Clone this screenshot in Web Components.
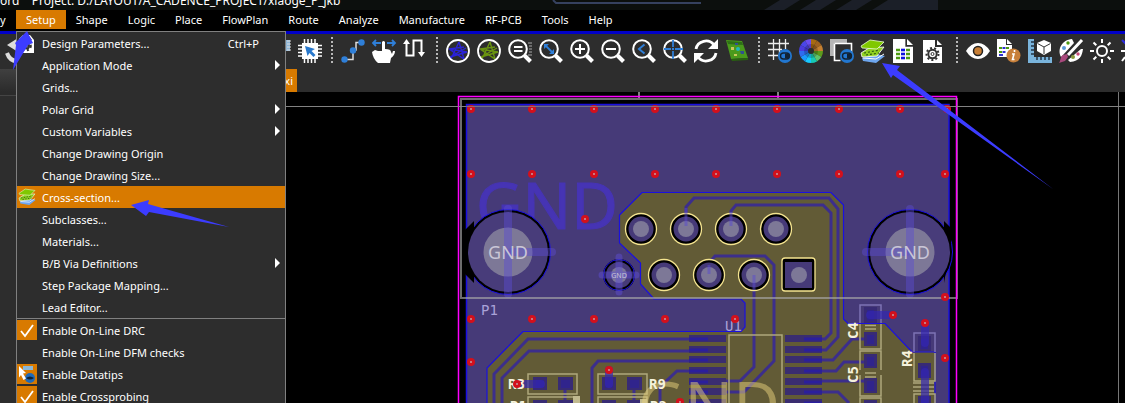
<!DOCTYPE html>
<html lang="en">
<head>
<meta charset="utf-8">
<title>PCB layout editor</title>
<style>
html,body{margin:0;height:100%;background:#000;overflow:hidden}
body{font:11px/22px "Noto Sans","Open Sans",sans-serif;color:#fff}
</style>
</head>
<body>
<app-window></app-window>
<script>
const define = (tag, html) => customElements.define(tag, class extends HTMLElement {
  constructor(){ super(); this.attachShadow({mode:'open'}).innerHTML = html; }
});

/* ---------- icons, 24px grid ---------- */
const lens = '<circle cx="10" cy="10" r="8.8" fill="none" stroke="#fff" stroke-width="2"/><path d="M16.5 16.5l6 6" stroke="#fff" stroke-width="4"/>';
const toggle = '<circle cx="17" cy="17" r="7" fill="#2277d0"/><rect x="12.5" y="14" width="9" height="6" rx="3" fill="none" stroke="#123" stroke-width="1.4"/><path d="M17 14.500h2a2.500 2.500 0 0 1 0 5h-2z" fill="#123"/>';
const page = '<path d="M1 0h13v7h7v17H1z" fill="#fff"/><path d="M15 0l6 6h-6z" fill="#fff"/>';
const net = c => `<path d="M13 3L5 20M13 3L18 20L3 10L21 13L4 18L20 9M3 10L18 8" fill="none" stroke="${c}" stroke-width="1.400"/><circle cx="12" cy="12" r="11" fill="none" stroke="#fff" stroke-width="1.8"/>`;
const wheel = ['#a76a12','#a0621e','#c48030','#5d9b1b','#5fc46a','#17c9b4','#18c8ff','#1a9bff','#2f6cf0','#4a3ae0','#4b46e8','#6a4cf0'].map((c,i)=>{
  const p=(a,r)=>{const t=(a*30-90)*Math.PI/180;return (12+r*Math.cos(t)).toFixed(2)+' '+(12+r*Math.sin(t)).toFixed(2)};
  return `<path d="M12 12L${p(i,12)}A12 12 0 0 1 ${p(i+1,12)}z" fill="${c}"/>`}).join('')+'<circle cx="12" cy="12" r="7" fill="#000" fill-opacity=".2"/><circle cx="12" cy="12" r="3" fill="#2d2d2d"/>';
const stack = '<path d="M1 19l14-4 9 2-9 7-13-2z" fill="#6ea6ee"/><path d="M2 19l13 1 8-5" fill="none" stroke="#fff"/><path d="M0 14l8-5 15-1-7 9-15 1z" fill="#8fd020" stroke="#fff" stroke-width=".8"/><path d="M3 14l16-3M5 16l13-2" stroke="#2d5d10" stroke-dasharray="2 2" stroke-width="1.200"/><path d="M0 7l9-6 14 2-7 7-15-1z" fill="#80c800" stroke="#e8ffd0" stroke-width=".8"/>';
const cells = [11,15,19].map(y=>`<path d="M4 ${y}h4M14 ${y}h4" stroke="#4c9a10" stroke-width="2.600"/><path d="M9 ${y}h4" stroke="#1010e0" stroke-width="2.600"/>`).join('');
const gear = (x,y,r,c)=>`<circle cx="${x}" cy="${y}" r="${r}" fill="none" stroke="${c}" stroke-width="2"/><circle cx="${x}" cy="${y}" r="${r+1.8}" fill="none" stroke="${c}" stroke-width="2" stroke-dasharray="2 2.170"/><circle cx="${x}" cy="${y}" r="1.500" fill="none" stroke="${c}"/>`;
const ICONS = {
  undo:'<path d="M0 6L11 -1V13z" fill="#dcdcdc"/><path d="M0 14Q3 23 12 22" fill="none" stroke="#dcdcdc" stroke-width="4"/>',
  blank:'',
  part:'<path d="M14 1h9v11h-9z" fill="#8fb6d6"/><path d="M20 2h4M20 5h4M20 8h4M20 11h4" stroke="#ddd"/>',
  chip:'<path d="M4 4h16v16H4z" fill="#fff"/><path d="M6.500 0v24M10 0v24M13.500 0v24M17 0v24M0 6.500h24M0 10h24M0 13.500h24M0 17h24" stroke="#fff" stroke-width="1.500"/><path d="M7 7l10 3-3.500 2 4 4-2 2-4-4-2 3z" fill="#2878cc"/>',
  route:'<path d="M3 20.500h9V11h3V3.500h5" fill="none" stroke="#ddd" stroke-width="1.500"/><g fill="#2f7fd8"><circle cx="3.500" cy="20.500" r="3.200"/><circle cx="12" cy="11.500" r="3.200"/><circle cx="20.500" cy="3.500" r="3.200"/></g>',
  hand:'<path d="M1 4h8M15 4h8M4 1L1 4l3 3M20 1l3 3-3 3" fill="none" stroke="#2f7fd8" stroke-width="1.800"/><path d="M0 13l3-2 3 1 4 0V3q1.500-2 3 0v7q6 0 6 3l1 2 1-3h2q0 4-4 7l-1 5H6Q1 20 0 13z" fill="#fff"/>',
  meander:'<path d="M3.500 4V16.500H10.500V1.500H18.500V15" fill="none" stroke="#fff" stroke-width="2"/><path d="M0 5l3.500-5L7 5zM15 13h7l-3.500 5z" fill="#fff"/>',
  netBlue:net('#2a22d8'), netGreen:net('#6a9410'),
  zoomSel:lens+'<path d="M6 8h8.500M6 12h8.500" stroke="#fff" stroke-width="2"/><path d="M20 4h4M21 7h3M21 10h3M21 13h3M20 16h4" stroke="#aaa"/>',
  zoomBox:lens+'<path d="M6 6l8 8" stroke="#2f7fd8" stroke-width="1.800"/><path d="M5 5h5l-5 5zM15 15v-5l-5 5z" fill="#2f7fd8"/>',
  zoomIn:lens+'<path d="M5 10h10M10 5v10" stroke="#fff" stroke-width="2"/>',
  zoomOut:lens+'<path d="M5 10h10" stroke="#fff" stroke-width="2"/>',
  zoomPrev:lens+'<path d="M12.500 5.500L7 10l5.500 4.500" fill="none" stroke="#2f7fd8" stroke-width="2"/>',
  zoomCtr:lens+'<path d="M10 1v7M10 12v8M1 10h7M12 10h8M10 9v2M9 10h2" stroke="#2f7fd8" stroke-width="1.800"/>',
  refresh:'<path d="M2 10A10 9.500 0 0 1 20 6M22 14A10 9.500 0 0 1 4 18" fill="none" stroke="#fff" stroke-width="2.800"/><path d="M24 0v10H14zM0 24V14h10z" fill="#fff"/>',
  board:'<path d="M1 1l16 1 6 17-17 1z" fill="#4a9a1c"/><path d="M2 2l15 1 1 3-15-1z" fill="#2d6f16"/><path d="M6 8h3v3H6zM9 15h3v2H9z" fill="#c8c85a"/><circle cx="13" cy="10" r="2" fill="#20b8b8"/><path d="M15 12h4v3h-3zM10 4h3v2h-3z" fill="#305090"/><path d="M6 20l17-1v2l-16 1z" fill="#286010"/>',
  grid:'<path d="M5.500 0v21M11.500 0v16M17.500 0v10M0 4.500h21M0 10.500h14M0 16.500h10" stroke="#eee" stroke-width="1.300"/>'+toggle,
  wheel, 
  layers:'<path d="M0 0h17v4H4v13H0z" fill="#b5b5b5"/><path d="M4.500 4.500h17v14M4.500 4.500v17h6" fill="none" stroke="#fff" stroke-width="1.600"/>'+toggle,
  stack,
  table:page+'<path d="M14 0v7h7" fill="none" stroke="#2d2d2d" stroke-width="1.300"/>'+cells,
  pageGear:'<path d="M0 1h12v7h7v16H0z" fill="#fff"/><path d="M14 1l5 5h-5z" fill="#fff"/>'+gear(9.500,15,4.200,'#333'),
  eye:'<path d="M0 12Q5 4 12 4T24 12Q19 20 12 20T0 12z" fill="#fff"/><circle cx="12" cy="12" r="4.500" fill="#c87f36" stroke="#222" stroke-width="1.500"/>',
  pageInfo:'<path d="M0 0h9v6h6v12H0z" fill="#fff"/><path d="M10 0l5 5h-5z" fill="#fff"/><path d="M2 9h3M2 13h3M9 9h3" stroke="#4c9a10" stroke-width="2"/><path d="M5.500 9h3M5.500 13h3M2 16h4" stroke="#3030d0" stroke-width="2"/><circle cx="16.500" cy="16.500" r="7" fill="#c8803a"/><path d="M15 15h2l-1.500 5.500h2M17.500 11v2" fill="none" stroke="#fff" stroke-width="1.600"/>',
  ruler:'<path d="M0 0h6v18h18v6H0z" fill="#7ab4dc"/><path d="M3 3h3M3 7h3M3 11h3M3 15h3M9 18v3M13 18v3M17 18v3M21 18v3" stroke="#234" stroke-width="1.500"/><path d="M16 1l7 3v8l-7 4-7-4V4z" fill="#fff"/><path d="M9.500 4.500L16 8l6.500-3.500M16 8v7" fill="none" stroke="#333"/>',
  palette:'<path d="M2 18C-2 10 3 1 13 0L15 4 4 16zM24 10C23 17 21 22 11 23L9 21 22 10z" fill="#fff"/><path d="M23 1L9 16" stroke="#fff" stroke-width="3"/><path d="M0 24C2 21 1 18 4 16l4-1 1 3-3 4z" fill="#a8487c"/><circle cx="9" cy="4" r="1.700" fill="#4c9a10"/><circle cx="5" cy="9" r="2" fill="#5a9ad8"/><circle cx="19" cy="15" r="1.700" fill="#c84a78"/><circle cx="14" cy="18" r="2" fill="#8a9a3a"/>',
  sun:'<circle cx="12" cy="12" r="5" fill="none" stroke="#fff" stroke-width="2"/><path d="M12 0v4M12 20v4M0 12h4M20 12h4M3.500 3.500l2.800 2.800M17.700 17.700l2.800 2.800M3.500 20.500l2.800-2.800M17.700 6.300l2.800-2.800" stroke="#fff" stroke-width="2"/>',
  shadow:'<path d="M1 1l4 4" stroke="#2a2ae0" stroke-width="2"/><path d="M0 12h4M1 22l3-4" stroke="#fff" stroke-width="2"/>',
  design:'<path d="M0 4L4 0h7l4 5v13H0z" fill="#fff"/><path d="M5 1h5l3 4H3z" fill="#333"/>'+gear(7.500,11,2.500,'#333'),
  tip:'<path d="M6 2h10v4H6z" fill="#8cb8d8"/><circle cx="13" cy="14" r="5" fill="#1f6ab8"/><path d="M9 14q4-3 8 0-4 3-8 0z" fill="#123"/><path d="M2 2l7 7-3 .500 3 5-2.500 1.500-2.500-5-2 2.500z" fill="#fff"/>',
  check:'<path d="M4 11l4 5 8-11" fill="none" stroke="#fff" stroke-width="1.800"/>'
};
customElements.define('ui-icon', class extends HTMLElement {
  constructor(){ super(); this.attachShadow({mode:'open'}); }
  connectedCallback(){
    const name = this.getAttribute('name'), small = this.hasAttribute('small');
    const box = !small ? '0 0 24 24' : name==='stack' ? '-3 -2 29 29' : name==='design' ? '-2 -2 20 20' : '0 0 20 20';
    this.shadowRoot.innerHTML = `<style>:host{display:block;width:24px;height:24px}:host([small]){width:20px;height:20px}svg{display:block;width:100%;height:100%;overflow:visible}</style><svg viewBox="${box}" aria-hidden="true">${ICONS[name]}</svg>`;
  }
});

/* ---------- title ---------- */
define('title-bar', `<style>
:host{display:flex;align-items:flex-end;height:10px;overflow:hidden;background:#0c0f0d;font-size:12px;line-height:18px;white-space:pre}
span{flex:none;width:345px}svg{flex:1;height:10px;min-width:0}
</style><span>ord    Project: D:/LAYOUT/A_CADENCE_PROJECT/xiaoge_P_jkb</span>
<svg aria-hidden="true"><g transform="translate(-345 0)"><path d="M553 0l3 3h145" fill="none" stroke="#36415f" stroke-width="2"/><path d="M764 10l16-10h20l-16 10zM800 10l16-10h20l-16 10zM836 10l16-10h20l-16 10zM872 10l16-10h50v10z" fill="#1b1f28"/></g></svg>`);

/* ---------- menu bar ---------- */
define('menu-bar', `<style>
:host{display:block;background:#000;border-bottom:3px solid #0000c8}
nav{display:flex;height:21px;align-items:flex-start;overflow:hidden}
button{all:unset;box-sizing:border-box;flex:none;padding:0 10px;height:19px;line-height:20px}
.cut{width:16px;padding:0}
.on{background:#d87a00}
</style><nav><button class="cut">y</button><button class="on">Setup</button><button>Shape</button><button>Logic</button><button>Place</button><button>FlowPlan</button><button>Route</button><button>Analyze</button><button>Manufacture</button><button>RF-PCB</button><button>Tools</button><button>Help</button></nav>`);

/* ---------- tool bar ---------- */
const tool = n => n==='|' ? '<i></i>' : `<button aria-label="${n}"><ui-icon name="${n}"></ui-icon></button>`;
define('tool-bar', `<style>
:host{display:flex;height:35px;background:#2d2d2d;padding:0 0 0 7px;box-sizing:border-box;overflow:hidden}
button{all:unset;flex:none;width:31px;height:24px;padding:5px 0}
i{flex:none;width:12px;margin:3px 0 5px;background:repeating-linear-gradient(#b8b8b8 0 2px,transparent 2px 4px) 2px 0/2px 100% no-repeat}
</style>${['undo','|','blank','blank','blank','blank','blank','blank','blank','part','chip','|','route','hand','meander','|','netBlue','netGreen','zoomSel','zoomBox','zoomIn','zoomOut','zoomPrev','zoomCtr','refresh','board','|','grid','wheel','layers','stack','table','pageGear','|','eye','pageInfo','ruler','palette','sun','shadow'].map(tool).join('')}`);

define('doc-tabs', `<style>
:host{display:flex;height:23px;background:#2d2d2d}
div{width:40px;background:linear-gradient(#404040,#2b2b2b)}
button{all:unset;box-sizing:border-box;width:257px;padding-right:4px;text-align:right;background:#d87a00;line-height:22px}
</style><div></div><button>xi</button>`);

/* ---------- Setup menu ---------- */
customElements.define('menu-row', class extends HTMLElement {
  constructor(){ super(); this.attachShadow({mode:'open'}); }
  connectedCallback(){
    const a = n => this.getAttribute(n), on = this.hasAttribute('checked'), tick = a('kind')==='check';
    const icon = a('icon') ? `<ui-icon small name="${a('icon')}"></ui-icon>` : '';
    const style = `<style>
:host{display:block}
.row{all:unset;box-sizing:border-box;display:flex;width:100%;height:22px;line-height:23px;padding-right:5px;position:relative}
:host([selected]) .row{background:#d87a00}
.gut{width:20px;height:20px;margin:1px 5px 0 0;flex:none}
.on{background:#d87a00}
.lab{flex:1}
kbd{font:inherit;margin-right:21px}
.sub{align-self:center;border-left:5px solid #fff;border-top:5px solid transparent;border-bottom:5px solid transparent}
input{appearance:none;margin:0;width:0;height:0}
</style>`;
    const key = a('key') ? `<kbd>${a('key')}</kbd>` : '', sub = this.hasAttribute('sub') ? '<span class="sub"></span>' : '';
    const inner = `<span class="gut ${on?'on':''}">${icon}</span><span class="lab"><slot></slot></span>${key}${sub}`;
    this.shadowRoot.innerHTML = style + (tick ? `<label class="row"><input type="checkbox" aria-label="${this.textContent}" ${on?'checked':''}>${inner}</label>` : `<button class="row">${inner}</button>`);
  }
});
define('setup-menu', `<style>
:host{display:block;width:268px;background:#2d2d2d;border:1px solid #808080}
hr{margin:0;border:0;height:1px;background:#808080}
</style>
<menu-row icon="design" key="Ctrl+P">Design Parameters...</menu-row>
<menu-row sub>Application Mode</menu-row>
<menu-row>Grids...</menu-row>
<menu-row sub>Polar Grid</menu-row>
<menu-row sub>Custom Variables</menu-row>
<menu-row>Change Drawing Origin</menu-row>
<menu-row>Change Drawing Size...</menu-row>
<menu-row icon="stack" selected>Cross-section...</menu-row>
<menu-row>Subclasses...</menu-row>
<menu-row>Materials...</menu-row>
<menu-row sub>B/B Via Definitions</menu-row>
<menu-row>Step Package Mapping...</menu-row>
<menu-row>Lead Editor...</menu-row>
<hr>
<menu-row kind="check" icon="check" checked>Enable On-Line DRC</menu-row>
<menu-row kind="check">Enable On-Line DFM checks</menu-row>
<menu-row kind="check" icon="tip" checked>Enable Datatips</menu-row>
<menu-row kind="check" icon="check" checked>Enable Crossprobing</menu-row>`);

/* ---------- board ---------- */
const via = ([x,y]) => `<g><circle cx="${x}" cy="${y}" r="4" fill="#d3101c"/><rect x="${x-1}" y="${y-1}" width="2" height="2" fill="#c87880"/></g>`;
const xs=[471,532,594,655,716,777,839,900];
const vias=[...xs.map(x=>[x,109]),[947,109],...xs.map(x=>[x,174]),[945,174],[471,319],[532,319],[594,319],[665,319],[735,319],[471,362],[585,219],[609,370],[517,384],[893,315],[925,323],[945,297],[945,358],[680,402]].map(via).join('');
const pin=(x,y)=>`<circle cx="${x}" cy="${y}" r="14" fill="#463a78" stroke="#000" stroke-width="3"/><circle cx="${x}" cy="${y}" r="15.500" fill="none" stroke="#f5e590" stroke-width="1.300"/><circle cx="${x}" cy="${y}" r="8" fill="#7d7897"/>`;
const mount=(x,dir)=>`<circle cx="${x}" cy="252" r="42.500" fill="#000" stroke="#1a10e0"/><path d="M${x-dir*43} 230l${dir*9}-9v62l-${dir*9}-9z" fill="#000"/><circle cx="${x}" cy="252" r="40" fill="#483c7a"/><circle cx="${x}" cy="252" r="24.500" fill="#7d7897"/><rect x="${x-4}" y="205" width="8" height="93" rx="4" fill="#5c4cd0" fill-opacity=".45"/><rect x="${dir>0?x:x-48}" y="248" width="48" height="8" rx="4" fill="#5c4cd0" fill-opacity=".45"/><text x="${x}" y="259" text-anchor="middle" font-size="18" fill="#c9c6d6">GND</text>`;
const ys=[335,346,356,367,378,388,399];
const icPins=ys.map(y=>`<path d="M689 ${y}h37v7h-37zM785 ${y}h37v7h-37z" fill="#3a2d70"/><path d="M689 ${y+4}h19M804 ${y+4}h18" stroke="#2b1f9c" stroke-width="3"/>`).join('');
const pads=a=>a.map(([x,y,w,h])=>`<rect x="${x}" y="${y}" width="${w}" height="${h}" fill="#382b74"/><rect x="${x+3}" y="${y+3}" width="${w-6}" height="${h-5}" fill="#2b1f9c" fill-opacity=".6"/>`).join('');
define('pcb-canvas', `<style>
:host{display:block;background:#000;overflow:hidden;position:relative}
svg{display:block;width:100%;height:100%;min-height:311px}
.mono{font:bold 14px "DejaVu Sans Mono",monospace}
.thin{font-weight:normal}
</style><svg role="img" aria-label="Board layout">
<line x1="0" x2="100%" y1="14.5" y2="14.5" stroke="#777"/>
<g transform="translate(-40 -92)">
<path d="M1118.500 92V500" stroke="#777"/><path d="M639 92v6M778 92v6" stroke="#808080" stroke-width="2"/>
<path d="M466.500 104.500H949V450H466.500z" fill="#463a78" stroke="#1a10e0" stroke-width="1.500"/>
<text x="476" y="229" font-size="64" fill="#4634b4" stroke="#4634b4">GND</text>
${mount(508,1)}${mount(910,-1)}
<path d="M642 192.500H831L843.500 205V319L848 323.500H885L912 352H935V450H487V368L523 331.500H741L745 327V303L741 299H654L640.500 284V263L619.500 243V215z" fill="#625b36" stroke="#1a10e0" stroke-width="1.200"/>
<g fill="none" stroke="#3c2e8c" stroke-width="3">
<path d="M709 339H528L494 374V410M709 351H529L502 378V410M709 361H598L592 368V410M709 371H677L660 387V410"/>
<path d="M805 339H825L831 333V213L823 205H736L731 211V224M805 350H826L838 337V209L829 198H694L686 207V224"/>
<path d="M709 270V263L715 256H765L774 265V361L744 392H690M754 280V367L740 381H690"/>
<path d="M805 360H833L852 339H870M805 371H836L844 362H870M805 381H864L870 386M805 392H838L849 403M565 384V410M634 384V410"/></g>
${icPins}
<g fill="none" stroke="#aea87c" stroke-width="1.500"><path d="M729 410V335H782V410"/>
<path d="M528 374H577V394H528zM598 374H647V394H598zM528 410V397H577V410M598 410V397H647V410"/>
<path d="M860 324V349H881V324M860 370V351H881V370M860 375V396H881V375M860 410V398H881V410M914 353V381H935V353M914 410V394H935V410M865 325.500h11M865 329h11M865 373h11M865 377h11M913 383h21M913 387h21M913 391h21"/></g>
<path d="M860 323V305H881V323M914 352V333H935V352" fill="none" stroke="#7d73b4" stroke-width="1.500"/>
${pads([[533,377,14,13],[558,377,15,13],[602,377,14,13],[627,377,15,13],[533,400,14,13],[558,400,15,13],[602,400,14,13],[627,400,15,13],[864,307,13,16],[864,332,13,14],[864,354,13,14],[864,378,13,15],[864,400,13,15],[918,336,13,15],[918,363,13,15],[918,396,13,15]])}
<path d="M517 384H541M609 370V384M870 315H893M925 323V343M925 372V410" stroke="#3326b0" stroke-opacity=".7" stroke-width="8" stroke-linecap="round"/>
<path d="M573 396h7v10h-7zM640 399h7v10h-7z" fill="#c0b98e"/>
${[641,686,731,776].map(x=>pin(x,229)).join('')}${[664,709,754].map(x=>pin(x,275)).join('')}
<path d="M686 208V226M731 212V226M709 265V274M754 275V290" stroke="#5a4ad0" stroke-opacity=".5" stroke-width="3"/>
<rect x="782" y="258" width="33" height="33" rx="3" fill="#000" stroke="#f5e590" stroke-width="1.300"/><rect x="785" y="262" width="27" height="26" fill="#463a78"/><circle cx="799" cy="275" r="8" fill="#7d7897"/>
<circle cx="619" cy="275" r="14.500" fill="#463a78" stroke="#000" stroke-width="3"/><circle cx="619" cy="275" r="15.500" fill="none" stroke="#1a10e0"/><circle cx="619" cy="275" r="8" fill="#7d7897"/><path d="M602 275H636M619 257V292" stroke="#5c4cd0" stroke-opacity=".5" stroke-width="7" stroke-linecap="round"/><text x="619" y="278" text-anchor="middle" font-size="7" fill="#c9c6d6">GND</text>
<path d="M461 99H957V298H461z" fill="none" stroke="#a8a8a8" stroke-opacity=".65" stroke-width="2"/>
<path d="M458.500 450V96.500H956.500V450" fill="none" stroke="#f0f" stroke-width="1.500"/>
<text x="638" y="428" font-size="64" fill="#e8d27c" fill-opacity=".5">GND</text>
<g class="mono" fill="#f6f2dc"><text x="508" y="389">R3</text><text x="649" y="389">R9</text><text x="510" y="411">R1</text><text x="650" y="411">R2</text>
<text transform="translate(858 339) rotate(-90)">C4</text><text transform="translate(858 383) rotate(-90)">C5</text><text transform="translate(912 367) rotate(-90)">R4</text>
<text class="thin" x="481" y="315" fill="#aaa2d8">P1</text><text class="thin" x="725" y="331" fill="#aaa2d8">U1</text></g>
${vias}
</g><line x1="0" x2="100%" y1="14.5" y2="14.5" stroke="#888" stroke-opacity=".7"/></svg>`);

/* ---------- annotation arrows, drawn over everything ---------- */
define('callout-arrows', `<style>:host{display:block;pointer-events:none}svg{display:block;width:100%;height:100%}</style>
<svg aria-hidden="true" fill="#3c3cff"><path d="M27 31L33 43L28 45L13 70L16 45L15 43z"/><path d="M131 205L149 200L148 204L229 227L149 212L146 216z"/><path d="M882 63L900 66L897 70L1053 189L893 75L891 78z"/></svg>`);

define('app-window', `<style>
:host{display:flex;flex-direction:column;min-height:100vh;position:relative}
main{flex:1;display:flex}
aside{width:40px;background:linear-gradient(#2b2b2b 3px,#444 3px 4px,#2d2d2d 4px)}
pcb-canvas{flex:1;min-width:0}
setup-menu{position:absolute;left:16px;top:31px}
callout-arrows{position:absolute;inset:0}
</style><title-bar></title-bar><menu-bar></menu-bar><tool-bar></tool-bar><doc-tabs></doc-tabs><main><aside></aside><pcb-canvas></pcb-canvas></main><setup-menu></setup-menu><callout-arrows></callout-arrows>`);
</script>
</body>
</html>
